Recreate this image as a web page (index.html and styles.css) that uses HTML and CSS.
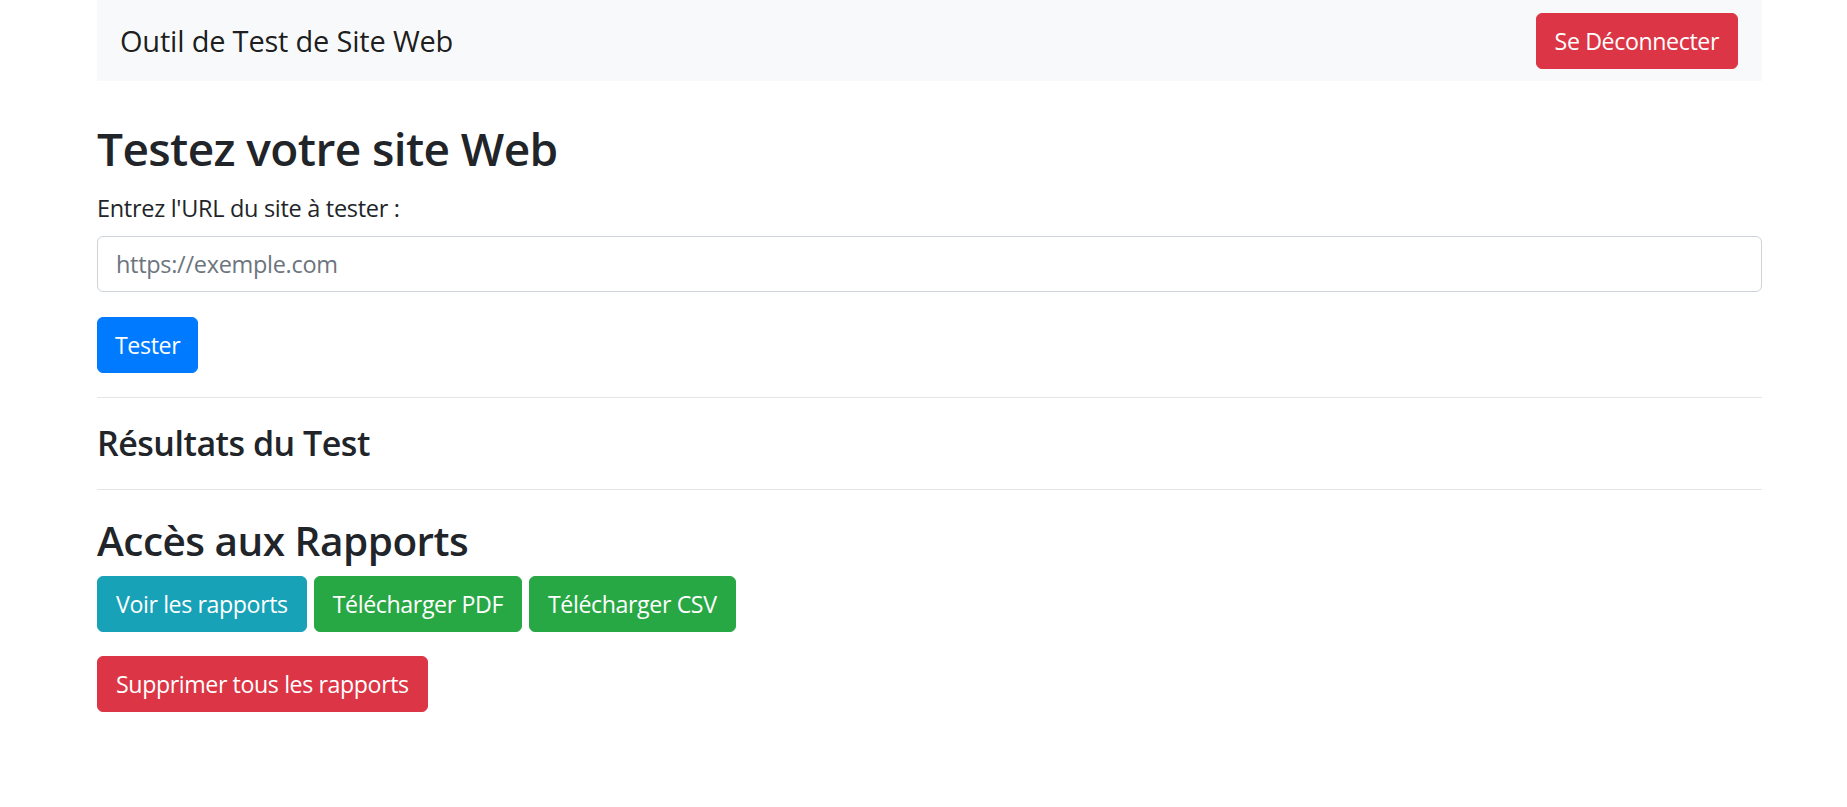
FILE: index.html
```html
<!DOCTYPE html>
<html lang="fr">
<head>
<meta charset="utf-8">
<title>Outil de Test de Site Web</title>
<link rel="stylesheet" href="styles.css">
</head>
<body>
<div class="container">
  <nav class="navbar">
    <span class="brand">Outil de Test de Site Web</span>
    <button class="btn btn-danger">Se Déconnecter</button>
  </nav>

  <h2 class="title">Testez votre site Web</h2>
  <form class="test-form">
    <label class="label" for="url">Entrez l'URL du site à tester :</label>
    <input class="input" id="url" type="text" placeholder="https://exemple.com">
    <div class="actions">
      <button type="button" class="btn btn-primary">Tester</button>
    </div>
  </form>

  <hr class="rule">
  <h4 class="subtitle">Résultats du Test</h4>
  <hr class="rule">

  <h3 class="reports-title">Accès aux Rapports</h3>
  <div class="btn-row">
    <button class="btn btn-info">Voir les rapports</button>
    <button class="btn btn-success">Télécharger PDF</button>
    <button class="btn btn-success">Télécharger CSV</button>
  </div>
  <div class="delete-row">
    <button class="btn btn-danger">Supprimer tous les rapports</button>
  </div>
</div>
</body>
</html>
```

FILE: styles.css
```css
* { box-sizing: border-box; }
html, body {
  margin: 0;
  padding: 0;
  background: #fff;
}
body {
  font-family: "Open Sans", "Noto Sans", "Liberation Sans", sans-serif;
  color: #212529;
  font-size: 24px;
  line-height: 1.5;
}
.container {
  width: 1665px;
  margin-left: 97px;
}
.navbar {
  display: flex;
  align-items: center;
  justify-content: space-between;
  height: 81px;
  padding: 0 24px 0 23px;
  background: #f8f9fa;
}
.brand {
  font-size: 29px;
  color: rgba(0,0,0,0.9);
  letter-spacing: -0.2px;
}
.btn {
  font-family: inherit;
  font-size: 23.2px;
  line-height: 36px;
  height: 56px;
  padding: 0 18px;
  border: 1px solid transparent;
  border-radius: 6px;
  color: #fff;
  cursor: pointer;
  letter-spacing: -0.4px;
}
.btn-danger { background: #dc3545; border-color: #dc3545; }
.btn-primary { background: #007bff; border-color: #007bff; padding: 0 17px; }
.btn-info { background: #17a2b8; border-color: #17a2b8; }
.btn-success { background: #28a745; border-color: #28a745; }

.title {
  margin: 40px 0 15px;
  font-size: 46px;
  font-weight: 600;
  line-height: 1.2;
  letter-spacing: -0.6px;
}
.test-form {
  display: flex;
  flex-direction: column;
  margin: 0;
}
.label {
  margin-bottom: 10px;
  font-size: 23.5px;
  letter-spacing: -0.3px;
}
.input {
  height: 56px;
  width: 100%;
  padding: 0 18px;
  font-family: inherit;
  font-size: 23.5px;
  color: #495057;
  border: 1px solid #ced4da;
  border-radius: 6px;
  background: #fff;
}
.input::placeholder { color: #6c757d; letter-spacing: -0.3px; }
.actions {
  margin-top: 25px;
}
.rule {
  margin: 24px 0;
  border: 0;
  border-top: 1px solid rgba(0,0,0,0.1);
}
.subtitle {
  margin: 0;
  font-size: 34px;
  font-weight: 600;
  line-height: 1.25;
  letter-spacing: -0.5px;
}
.reports-title {
  margin: 0 0 7px;
  font-size: 40.5px;
  font-weight: 600;
  line-height: 1.35;
  letter-spacing: -0.5px;
}
.btn-row {
  display: flex;
  gap: 7px;
}
.delete-row {
  margin-top: 24px;
}
```
